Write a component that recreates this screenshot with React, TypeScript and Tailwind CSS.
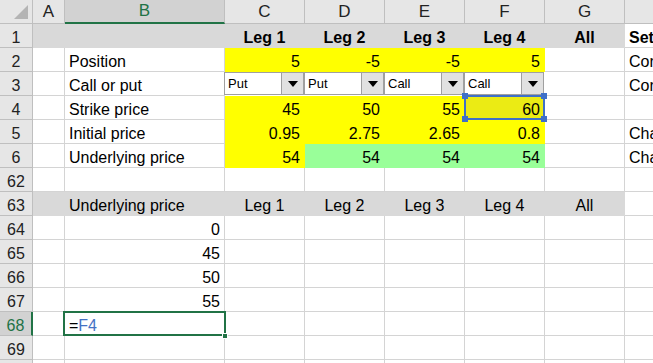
import React from "react";

type Cell = {
  v?: string;
  cls?: string;
  dd?: boolean;
  sel?: boolean;
  active?: boolean;
};

const colHeads = ["A", "B", "C", "D", "E", "F", "G", "H"];

const Y = "bg-[#ffff00] border-[#ffff00]";
const G = "bg-[#99ff99] border-[#99ff99]";
const GR = "bg-[#d9d9d9] border-[#d9d9d9]";

const rows: { n: string; cells: Cell[] }[] = [
  {
    n: "1",
    cells: [
      { cls: GR },
      { cls: GR },
      { v: "Leg 1", cls: GR + " justify-center font-bold" },
      { v: "Leg 2", cls: GR + " justify-center font-bold" },
      { v: "Leg 3", cls: GR + " justify-center font-bold" },
      { v: "Leg 4", cls: GR + " justify-center font-bold" },
      { v: "All", cls: GR + " justify-center font-bold" },
      { v: "Set", cls: "font-bold" },
    ],
  },
  {
    n: "2",
    cells: [
      {},
      { v: "Position" },
      { v: "5", cls: Y + " justify-end" },
      { v: "-5", cls: Y + " justify-end" },
      { v: "-5", cls: Y + " justify-end" },
      { v: "5", cls: Y + " justify-end" },
      {},
      { v: "Cor" },
    ],
  },
  {
    n: "3",
    cells: [
      {},
      { v: "Call or put" },
      { v: "Put", dd: true },
      { v: "Put", dd: true },
      { v: "Call", dd: true },
      { v: "Call", dd: true },
      {},
      { v: "Cor" },
    ],
  },
  {
    n: "4",
    cells: [
      {},
      { v: "Strike price" },
      { v: "45", cls: Y + " justify-end" },
      { v: "50", cls: Y + " justify-end" },
      { v: "55", cls: Y + " justify-end" },
      { v: "60", sel: true, cls: "bg-[#ebeb14] border-[#ebeb14] justify-end" },
      {},
      {},
    ],
  },
  {
    n: "5",
    cells: [
      {},
      { v: "Initial price" },
      { v: "0.95", cls: Y + " justify-end" },
      { v: "2.75", cls: Y + " justify-end" },
      { v: "2.65", cls: Y + " justify-end" },
      { v: "0.8", cls: Y + " justify-end" },
      {},
      { v: "Cha" },
    ],
  },
  {
    n: "6",
    cells: [
      {},
      { v: "Underlying price" },
      { v: "54", cls: Y + " justify-end" },
      { v: "54", cls: G + " justify-end" },
      { v: "54", cls: G + " justify-end" },
      { v: "54", cls: G + " justify-end" },
      {},
      { v: "Cha" },
    ],
  },
  { n: "62", cells: [{}, {}, {}, {}, {}, {}, {}, {}] },
  {
    n: "63",
    cells: [
      { cls: GR },
      { v: "Underlying price", cls: GR },
      { v: "Leg 1", cls: GR + " justify-center" },
      { v: "Leg 2", cls: GR + " justify-center" },
      { v: "Leg 3", cls: GR + " justify-center" },
      { v: "Leg 4", cls: GR + " justify-center" },
      { v: "All", cls: GR + " justify-center" },
      {},
    ],
  },
  { n: "64", cells: [{}, { v: "0", cls: "justify-end" }, {}, {}, {}, {}, {}, {}] },
  { n: "65", cells: [{}, { v: "45", cls: "justify-end" }, {}, {}, {}, {}, {}, {}] },
  { n: "66", cells: [{}, { v: "50", cls: "justify-end" }, {}, {}, {}, {}, {}, {}] },
  { n: "67", cells: [{}, { v: "55", cls: "justify-end" }, {}, {}, {}, {}, {}, {}] },
  { n: "68", cells: [{}, { v: "=F4", active: true }, {}, {}, {}, {}, {}, {}] },
  { n: "69", cells: [{}, {}, {}, {}, {}, {}, {}, {}] },
  { n: "", cells: [{}, {}, {}, {}, {}, {}, {}, {}] },
];

function Dropdown({ label }: { label: string }) {
  return (
    <div className="absolute -left-px top-0 w-[calc(100%+1px)] h-full flex bg-white border border-[#a0a0a0]">
      <span className="flex-1 flex items-center pl-[3px] pt-px text-[13px] text-black">{label}</span>
      <span className="w-[22px] flex items-center justify-center bg-[#e1e1e1] border-l border-[#a0a0a0]">
        <svg width="10" height="6" viewBox="0 0 10 6">
          <path d="M0 0H10L5 6Z" fill="#000" />
        </svg>
      </span>
    </div>
  );
}

function Handle({ pos }: { pos: string }) {
  return <span className={"absolute z-10 w-[6px] h-[6px] bg-[#3f70c8] " + pos} />;
}

function GridCell({ c }: { c: Cell }) {
  if (c.dd) {
    return (
      <div className="relative h-6 border-b border-r border-white">
        <Dropdown label={c.v ?? ""} />
      </div>
    );
  }
  return (
    <div
      className={
        "relative h-6 flex items-end pb-px px-[4px] leading-4 whitespace-nowrap border-b border-r " +
        (c.cls && c.cls.includes("bg-") ? c.cls : "border-[#d4d4d4] " + (c.cls ?? ""))
      }
    >
      {c.active ? (
        <>
          <span>
            =<span className="text-[#4472c4]">F4</span>
          </span>
          <span className="absolute -left-[2px] -top-[1px] right-[-2px] bottom-[-1px] border-2 border-[#217346]" />
          <span className="absolute z-10 right-[-4px] bottom-[-4px] w-[6px] h-[6px] bg-[#217346] border border-white" />
        </>
      ) : (
        <span>{c.v}</span>
      )}
      {c.sel && (
        <>
          <span className="absolute -left-px -top-px right-[-1px] bottom-[-1px] border-2 border-[#3f70c8]" />
          <Handle pos="-left-[3px] -top-[3px]" />
          <Handle pos="-right-[3px] -top-[3px]" />
          <Handle pos="-left-[3px] -bottom-[3px]" />
          <Handle pos="-right-[3px] -bottom-[3px]" />
        </>
      )}
    </div>
  );
}

export default function App() {
  return (
    <div className="w-[653px] h-[363px] overflow-hidden bg-white text-[16px] text-black font-['Liberation_Sans',Arial,sans-serif]">
      <div className="grid w-[705px] grid-cols-[33px_32px_160px_80px_80px_80px_80px_80px_80px]">
        {/* column headers */}
        <div className="relative h-6 bg-[#e6e6e6] border-r border-b border-[#bfbfbf]">
          <svg className="absolute right-[4px] bottom-[4px]" width="14" height="14" viewBox="0 0 14 14">
            <path d="M14 0V14H0Z" fill="#b4b4b4" />
          </svg>
        </div>
        {colHeads.map((h) => (
          <div
            key={h}
            className={
              h === "B"
                ? "h-6 flex items-center justify-center bg-[#d2d2d2] text-[#217346] text-[17px] border-r border-[#bfbfbf] border-b-2 border-b-[#217346]"
                : "h-6 flex items-center justify-center bg-[#e6e6e6] text-[#222] text-[17px] border-r border-b border-[#bfbfbf]"
            }
          >
            {h}
          </div>
        ))}

        {rows.map((r, idx) => (
          <React.Fragment key={idx}>
            <div
              className={
                r.n === "68"
                  ? "h-6 flex items-end pb-px leading-4 justify-center bg-[#d2d2d2] text-[#217346] border-b border-[#bfbfbf] border-r-2 border-r-[#217346]"
                  : "h-6 flex items-end pb-px leading-4 justify-center bg-[#e6e6e6] text-[#222] border-r border-b border-[#bfbfbf]"
              }
            >
              {r.n}
            </div>
            {r.cells.map((c, i) => (
              <GridCell key={i} c={c} />
            ))}
          </React.Fragment>
        ))}
      </div>
    </div>
  );
}
